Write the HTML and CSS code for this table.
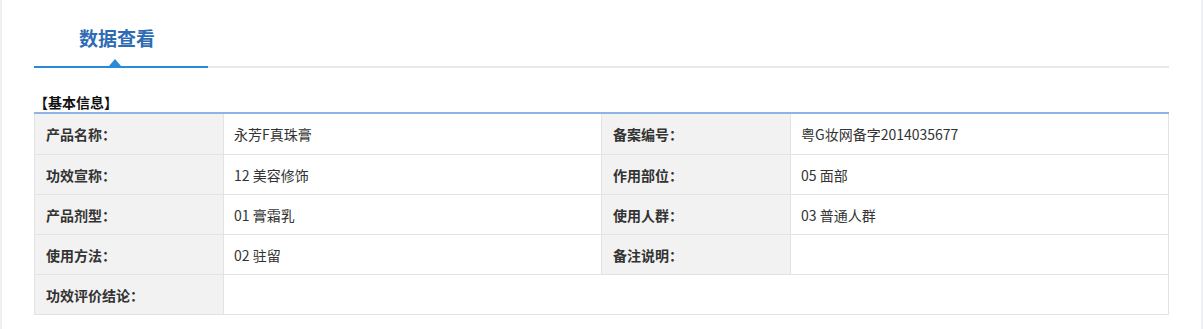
FILE: index.html
```html
<!DOCTYPE html>
<html lang="zh-CN">
<head>
<meta charset="utf-8">
<title>数据查看</title>
<link rel="stylesheet" href="styles.css">
</head>
<body>
<div class="panel">
  <div class="tabs">
    <div class="tab">数据查看<span class="tab-arrow"></span></div>
  </div>
  <div class="section-title">【基本信息】</div>
  <table class="info">
    <colgroup>
      <col class="c-label"><col class="c-value"><col class="c-label"><col>
    </colgroup>
    <tr>
      <td class="label">产品名称：</td><td>永芳F真珠膏</td>
      <td class="label">备案编号：</td><td>粤G妆网备字2014035677</td>
    </tr>
    <tr>
      <td class="label">功效宣称：</td><td>12 美容修饰</td>
      <td class="label">作用部位：</td><td>05 面部</td>
    </tr>
    <tr>
      <td class="label">产品剂型：</td><td>01 膏霜乳</td>
      <td class="label">使用人群：</td><td>03 普通人群</td>
    </tr>
    <tr>
      <td class="label">使用方法：</td><td>02 驻留</td>
      <td class="label">备注说明：</td><td></td>
    </tr>
    <tr>
      <td class="label">功效评价结论：</td><td colspan="3"></td>
    </tr>
  </table>
</div>
</body>
</html>
```

FILE: styles.css
```css
html, body {
  margin: 0;
  padding: 0;
}
body {
  background: #eef0f4;
  font-family: "Noto Sans CJK SC", "Noto Sans", sans-serif;
  color: #333;
}
.panel {
  margin: 0 2px;
  background: #fff;
  min-height: 329px;
  padding: 0 32px;
  box-sizing: border-box;
  overflow: hidden;
}
.tabs {
  padding-top: 22px;
  border-bottom: 2px solid #e8e8e8;
  display: flex;
}
.tab {
  position: relative;
  width: 129px;
  height: 44px;
  padding-left: 45px;
  font-size: 19px;
  line-height: 32px;
  font-weight: bold;
  color: #2d6bb5;
  border-bottom: 2px solid #2b8ad8;
  margin-bottom: -2px;
}
.tab-arrow {
  position: absolute;
  left: 75px;
  bottom: 0;
  width: 0;
  height: 0;
  border-left: 6px solid transparent;
  border-right: 6px solid transparent;
  border-bottom: 7px solid #2b8ad8;
}
.section-title {
  margin-top: 24px;
  font-size: 14px;
  line-height: 20px;
  font-weight: bold;
  color: #111;
}
.info {
  width: 100%;
  border-collapse: collapse;
  border-top: 2px solid #8fb3e3;
  table-layout: fixed;
  font-size: 14px;
}
.c-label { width: 189px; }
.c-value { width: 378px; }
.info td {
  border: 1px solid #e3e3e3;
  height: 39px;
  padding: 0 10px;
  vertical-align: middle;
  color: #333;
}
.info tr:first-child td {
  border-top: 2px solid #8fb3e3;
  height: 40px;
}
.info td.label {
  background: #f2f2f2;
  font-weight: bold;
  padding-left: 11px;
}
```
